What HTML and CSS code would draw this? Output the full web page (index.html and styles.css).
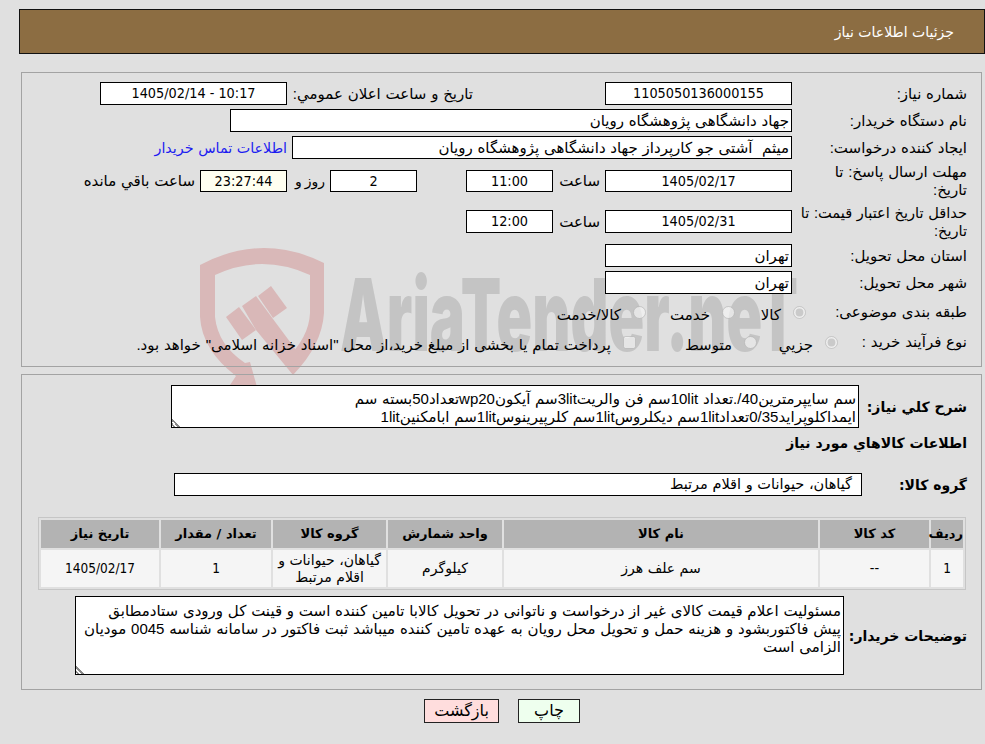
FILE: index.html
```html
<!DOCTYPE html>
<html lang="fa" dir="rtl">
<head>
<meta charset="utf-8">
<title>جزئیات اطلاعات نیاز</title>
<link rel="stylesheet" href="styles.css">
</head>
<body>
<svg class="watermark" width="985" height="744" viewBox="0 0 985 744" aria-hidden="true">
  <g class="wm-red">
    <path d="M200 265 Q262 232 324 263 L324 313 Q322 345 293 375 L285 360 Q309 338 310 313 L310 275 Q262 253 215 275 L215 317 Q218 345 245 363 L250 362 L257 387 L230 385 L236 376 Q202 350 200 317 Z"/>
    <polygon points="226,317 239,307 256,330 242,340"/>
    <polygon points="242,306 256,296 273,319 302,358 293,375 256,330"/>
    <polygon points="258,296 271,286 287,308 273,318"/>
  </g>
  <text class="wm-text" x="340" y="351" textLength="458" lengthAdjust="spacingAndGlyphs" direction="ltr" unicode-bidi="bidi-override">AriaTender.neT</text>
</svg>
<main class="page">
  <header class="title-bar"><h1 class="title">جزئیات اطلاعات نیاز</h1></header>

  <section class="panel panel-info">
    <div class="row">
      <div class="label">شماره نیاز:</div>
      <div class="box box-date num">1105050136000155</div>
      <div class="label-mid">تاریخ و ساعت اعلان عمومي:</div>
      <div class="box box-date num">10:17 - 1405/02/14</div>
    </div>
    <div class="row">
      <div class="label">نام دستگاه خریدار:</div>
      <div class="box box-buyer">جهاد دانشگاهی پژوهشگاه رویان</div>
    </div>
    <div class="row">
      <div class="label">ایجاد کننده درخواست:</div>
      <div class="box box-creator">میثم&nbsp; آشتی جو کارپرداز جهاد دانشگاهی پژوهشگاه رویان</div>
      <a class="contact" href="#">اطلاعات تماس خریدار</a>
    </div>
    <div class="row row-tall">
      <div class="label">مهلت ارسال پاسخ: تا<br>تاریخ:</div>
      <div class="box box-date box-short num">1405/02/17</div>
      <div class="hour">ساعت</div>
      <div class="box box-time box-short num">11:00</div>
      <div class="box box-days box-short num">2</div>
      <div class="days-label">روز و</div>
      <div class="box box-count box-short num">23:27:44</div>
      <div class="remain">ساعت باقي مانده</div>
    </div>
    <div class="row row-tall row-tall2">
      <div class="label label-valid">حداقل تاریخ اعتبار قیمت: تا<br>تاریخ:</div>
      <div class="box box-date num">1405/02/31</div>
      <div class="hour">ساعت</div>
      <div class="box box-time num">12:00</div>
    </div>
    <div class="row">
      <div class="label">استان محل تحویل:</div>
      <div class="box box-date box-start">تهران</div>
    </div>
    <div class="row">
      <div class="label">شهر محل تحویل:</div>
      <div class="box box-date box-start">تهران</div>
    </div>
    <div class="row row-opt">
      <div class="label label-cat">طبقه بندی موضوعی:</div>
      <div class="options">
        <label class="opt opt-goods"><input class="mark" type="radio" name="cat" checked disabled><span class="opt-text">کالا</span></label>
        <label class="opt opt-service"><input class="mark" type="radio" name="cat" disabled><span class="opt-text">خدمت</span></label>
        <label class="opt"><input class="mark" type="radio" name="cat" disabled><span class="opt-text">کالا/خدمت</span></label>
      </div>
    </div>
    <div class="row row-opt">
      <div class="label label-proc">نوع فرآیند خرید :</div>
      <div class="options">
        <label class="opt opt-small"><input class="mark" type="radio" name="proc" checked disabled><span class="opt-text">جزيي</span></label>
        <label class="opt opt-mid"><input class="mark" type="radio" name="proc" disabled><span class="opt-text">متوسط</span></label>
        <label class="opt"><input class="mark" type="checkbox" disabled><span class="opt-text">پرداخت تمام یا بخشی از مبلغ خرید،از محل "اسناد خزانه اسلامی" خواهد بود.</span></label>
      </div>
    </div>
  </section>

  <section class="panel panel-goods">
    <div class="row">
      <div class="label-bold label-desc">شرح كلي نياز:</div>
      <textarea class="note note-desc" readonly>سم سایپرمترین40/.تعداد 10litسم فن والریت3litسم آیکونwp20تعداد50بسته سم
ایمداکلوپراید0/35تعداد1litسم دیکلروس1litسم کلرپیرینوس1litسم ابامکنین1lit</textarea>
    </div>
    <h2 class="goods-title">اطلاعات كالاهاي مورد نياز</h2>
    <div class="row row-group">
      <div class="label-bold label-group">گروه کالا:</div>
      <div class="box box-group">گیاهان، حیوانات و اقلام مرتبط</div>
    </div>
    <table class="items">
      <colgroup>
        <col class="c1"><col class="c2"><col class="c3"><col class="c4"><col class="c5"><col class="c6"><col class="c7">
      </colgroup>
      <thead>
        <tr><th>ردیف</th><th>کد کالا</th><th>نام کالا</th><th>واحد شمارش</th><th>گروه کالا</th><th>تعداد / مقدار</th><th>تاریخ نیاز</th></tr>
      </thead>
      <tbody>
        <tr><td class="num-cell">1</td><td>--</td><td>سم علف هرز</td><td>کیلوگرم</td><td>گیاهان، حیوانات و اقلام مرتبط</td><td class="num-cell">1</td><td class="num-cell">1405/02/17</td></tr>
      </tbody>
    </table>
    <div class="row row-buyer">
      <div class="label-bold label-note">توضیحات خریدار:</div>
      <textarea class="note note-buyer" readonly>مسئولیت اعلام قیمت کالای غیر از درخواست و ناتوانی در تحویل کالابا تامین کننده است و قینت کل ورودی ستادمطابق
پیش فاکتوربشود و هزینه حمل و تحویل محل رویان به عهده تامین کننده میباشد ثبت فاکتور در سامانه شناسه 0045 مودیان
الزامی است</textarea>
    </div>
  </section>

  <div class="actions">
    <button class="btn btn-print" type="button">چاپ</button>
    <button class="btn btn-back" type="button">بازگشت</button>
  </div>
</main>
</body>
</html>
```
FILE: styles.css
```css
* { box-sizing: border-box; }
html, body { margin: 0; padding: 0; }
body {
  background: #e0e0e0;
  color: #000;
  font-family: "Liberation Sans", "DejaVu Sans", sans-serif;
  font-size: 15px;
  word-spacing: 0.6px;
  line-height: 18px;
  overflow: hidden;
  height: 744px;
}
.watermark { position: absolute; left: 0; top: 0; z-index: 0; pointer-events: none; }
.wm-red { fill: #d9b8b8; }
.wm-text { fill: #c4c4c4; font-family: Inter, sans-serif; font-weight: 900; font-size: 100px; }
.page { position: relative; z-index: 1; width: 985px; }

.title-bar {
  margin: 9px 0 0 0;
  width: 966px;
  height: 45px;
  background: #8c6d42;
  border: 1px solid #111;
  display: flex;
  align-items: center;
  padding: 0 30px;
}
.title { margin: 0; color: #fff; font-size: 14px; font-weight: 400; }

.panel {
  width: 961px;
  margin-right: 3px;
  border: 1px solid #a3a3a3;
  padding-right: 14px;
}
.panel-info { margin-top: 18px; height: 295px; padding-top: 9px; }
.panel-goods { margin-top: 7px; height: 316px; padding-top: 10px; }

.row { display: flex; align-items: center; margin-bottom: 4px; }
.row-tall { height: 36px; }
.row-tall2 { height: 37px; }
.row-opt { height: 28px; margin-bottom: 2px; }

.label { width: 175px; flex: none; white-space: nowrap; }
.label-valid { font-size: 14.6px; }
.label-cat { width: 161px; }
.label-proc { width: 129px; }
.label-mid { width: 181px; margin-right: 132px; margin-left: 5px; flex: none; white-space: nowrap; }
.label-bold { font-weight: 700; font-size: 14px; flex: none; font-family: "DejaVu Sans", sans-serif; word-spacing: 0; }
.label-desc { width: 108px; }
.label-group { width: 105px; }
.label-note { width: 123px; }

.box {
  background: #fff;
  border: 1px solid #000;
  height: 23px;
  line-height: 21px;
  flex: none;
  white-space: nowrap;
  overflow: hidden;
  text-align: center;
}
.num { font-family: "DejaVu Sans Condensed", "DejaVu Sans", sans-serif; font-stretch: condensed; font-size: 14.3px; word-spacing: 0; }
.box-short { height: 22px; line-height: 20px; }
.box-date { width: 187px; }
.box-start { text-align: right; padding-right: 2px; }
.box-buyer { width: 562px; text-align: right; padding-right: 2px; }
.box-creator { width: 500px; text-align: right; padding-right: 2px; }
.box-time { width: 87px; }
.box-days { width: 87px; margin-right: 49px; }
.box-count { width: 87px; background: #fffff0; }
.box-group { width: 688px; text-align: right; padding-right: 9px; font-size: 14.5px; }

.contact { color: #1c1cf0; text-decoration: none; margin-right: 5px; white-space: nowrap; font-size: 14.3px; }
.hour { width: 52px; flex: none; padding-right: 5px; }
.days-label { width: 43px; flex: none; padding-right: 5px; word-spacing: -1px; font-size: 14px; }
.remain { flex: none; padding-right: 5px; white-space: nowrap; }

.options { display: flex; align-items: center; }
.opt { display: flex; align-items: center; }
.mark { margin: 0 0 0 12px; width: 13px; height: 13px; flex: none; }
.opt-text { margin-top: 6px; white-space: nowrap; }
.opt-goods { width: 71px; }
.opt-service { width: 89px; }
.opt-small { width: 81px; }
.opt-mid { width: 121px; }

.note {
  display: block;
  background: #fff;
  border: 1px solid #000;
  font: inherit;
  word-spacing: inherit;
  color: #000;
  direction: rtl;
  overflow: hidden;
  white-space: pre;
  margin: 0;
  flex: none;
  border-radius: 0;
  outline: none;
}
.note::-webkit-resizer {
  background: linear-gradient(45deg, transparent 8%, #888 8%, #888 20%, transparent 20%, transparent 30%, #888 30%, #888 42%, transparent 42%) left bottom / 10px 10px no-repeat;
}
.note-desc { width: 688px; height: 43px; padding: 4px 2px 0; }
.note-buyer { width: 769px; height: 79px; padding: 5px 2px 0; }

.goods-title { margin: 6px 0 0; height: 18px; font-size: 14px; font-weight: 700; line-height: 18px; font-family: "DejaVu Sans", sans-serif; word-spacing: 0; }
.row-group { margin: 21px 0 0; }

.items {
  width: 928px;
  margin: 21px 1px 0 0;
  border: 1px solid #c6c6c6;
  border-collapse: separate;
  border-spacing: 2px;
  table-layout: fixed;
  text-align: center;
}
.items th { background: #b3b3b3; height: 28px; padding: 0; font-weight: 700; font-size: 13px; font-family: "DejaVu Sans", sans-serif; word-spacing: 0; }
.items td { background: #f5f5f5; height: 37px; padding: 0 4px; line-height: 17px; font-size: 14px; }
.items .num-cell { font-family: "DejaVu Sans Condensed", "DejaVu Sans", sans-serif; font-stretch: condensed; font-size: 13.5px; }
.c1 { width: 32px; }
.c2 { width: 109px; }
.c3 { width: 314px; }
.c4 { width: 114px; }
.c5 { width: 113px; }
.c6 { width: 110px; }
.c7 { width: 118px; }

.row-buyer { margin: 6px 0 0; }

.actions { display: flex; justify-content: center; gap: 19px; padding-left: 19px; margin-top: 9px; }
.btn {
  font-family: inherit;
  font-size: 16px;
  line-height: 18px;
  height: 24px;
  border: 1px solid #222;
  border-radius: 0;
  padding: 0;
  color: #000;
}
.btn-print { width: 62px; background: #eeffee; }
.btn-back { width: 75px; background: #ffdddd; }
```
